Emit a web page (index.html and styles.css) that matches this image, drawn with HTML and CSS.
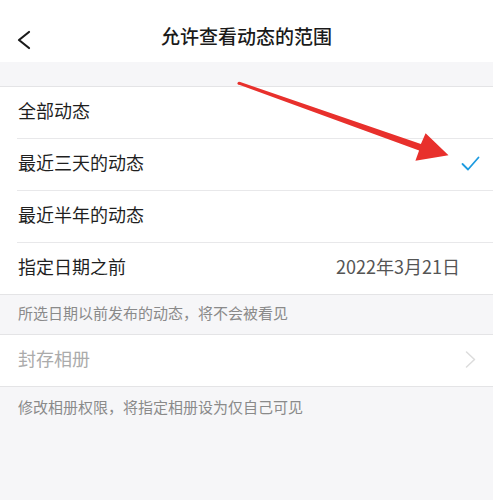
FILE: index.html
```html
<!DOCTYPE html>
<html lang="zh-CN">
<head>
<meta charset="utf-8">
<title>允许查看动态的范围</title>
<link rel="stylesheet" href="styles.css">
</head>
<body>
<div class="page">
  <header class="nav">
    <svg class="back" width="16" height="20" viewBox="0 0 16 20"><polyline points="13,2 3,10 13,18" fill="none" stroke="#1a1a1a" stroke-width="2.2" stroke-linecap="round" stroke-linejoin="round"/></svg>
    <h1 class="title">允许查看动态的范围</h1>
  </header>
  <div class="spacer"></div>
  <section class="group">
    <div class="row"><span class="label">全部动态</span></div>
    <div class="row"><span class="label">最近三天的动态</span>
      <svg class="check" width="19" height="15" viewBox="0 0 19 15"><polyline points="1.5,8 7,13.5 17.5,1.5" fill="none" stroke="#1d9be0" stroke-width="1.8" stroke-linecap="round" stroke-linejoin="round"/></svg>
    </div>
    <div class="row"><span class="label">最近半年的动态</span></div>
    <div class="row"><span class="label">指定日期之前</span><span class="value">2022年3月21日</span></div>
  </section>
  <p class="note note-first">所选日期以前发布的动态，将不会被看见</p>
  <section class="group">
    <div class="row"><span class="label disabled">封存相册</span>
      <svg class="chev" width="11" height="17" viewBox="0 0 11 17"><polyline points="1.5,1 9.5,8.5 1.5,16" fill="none" stroke="#dcdcdc" stroke-width="1.5" stroke-linecap="round" stroke-linejoin="round"/></svg>
    </div>
  </section>
  <p class="note note-second">修改相册权限，将指定相册设为仅自己可见</p>

  <svg class="annot" width="493" height="500" viewBox="0 0 493 500">
    <polygon fill="#e8302c" points="239.5,81.8 420.9,143.9 425.6,133.2 448.5,155.2 415.4,160.8 419.1,150.5 238.5,84.6"/>
    <circle cx="239" cy="83.2" r="1.5" fill="#e8302c"/>
  </svg>
</div>
</body>
</html>
```
FILE: styles.css
```css
* { box-sizing: border-box; }
html, body { margin: 0; padding: 0; }
body {
  background: #f6f6f8;
  font-family: "Noto Sans CJK SC", "Noto Sans", sans-serif;
  color: #222;
}
.page {
  position: relative;
  width: 493px;
  height: 500px;
  overflow: hidden;
}
.nav {
  position: relative;
  height: 62px;
  background: #fff;
  display: flex;
  justify-content: center;
  padding-top: 24px;
}
.back {
  position: absolute;
  left: 16px;
  top: 30px;
}
.title {
  margin: 0;
  font-size: 19px;
  font-weight: 500;
  color: #1a1a1a;
  line-height: 24px;
}
.spacer { height: 24px; }
.group {
  background: #fff;
  border-top: 1px solid #e4e4e6;
  border-bottom: 1px solid #e4e4e6;
}
.row {
  position: relative;
  height: 52px;
  display: flex;
  align-items: center;
  justify-content: space-between;
  padding: 0 13px 5px 18px;
}
.row + .row::before {
  content: "";
  position: absolute;
  left: 17px;
  right: 0;
  top: 0;
  border-top: 1px solid #e8e8ea;
}
.group .row:first-child { height: 51px; }
.label {
  font-size: 18px;
  color: #1f1f1f;
}
.label.disabled { color: #ababab; }
.value {
  font-size: 18px;
  color: #555;
  margin-right: 20px;
}
.check { margin-top: 3px; }
.chev { margin-right: 4px; margin-top: 3px; }
.note {
  margin: 0;
  padding: 0 18px;
  font-size: 15px;
  color: #8a8a8a;
}
.note-first {
  height: 39px;
  line-height: 35px;
}
.note-second {
  padding-top: 10px;
  line-height: 20px;
}
.annot {
  position: absolute;
  left: 0;
  top: 0;
  pointer-events: none;
}
```
